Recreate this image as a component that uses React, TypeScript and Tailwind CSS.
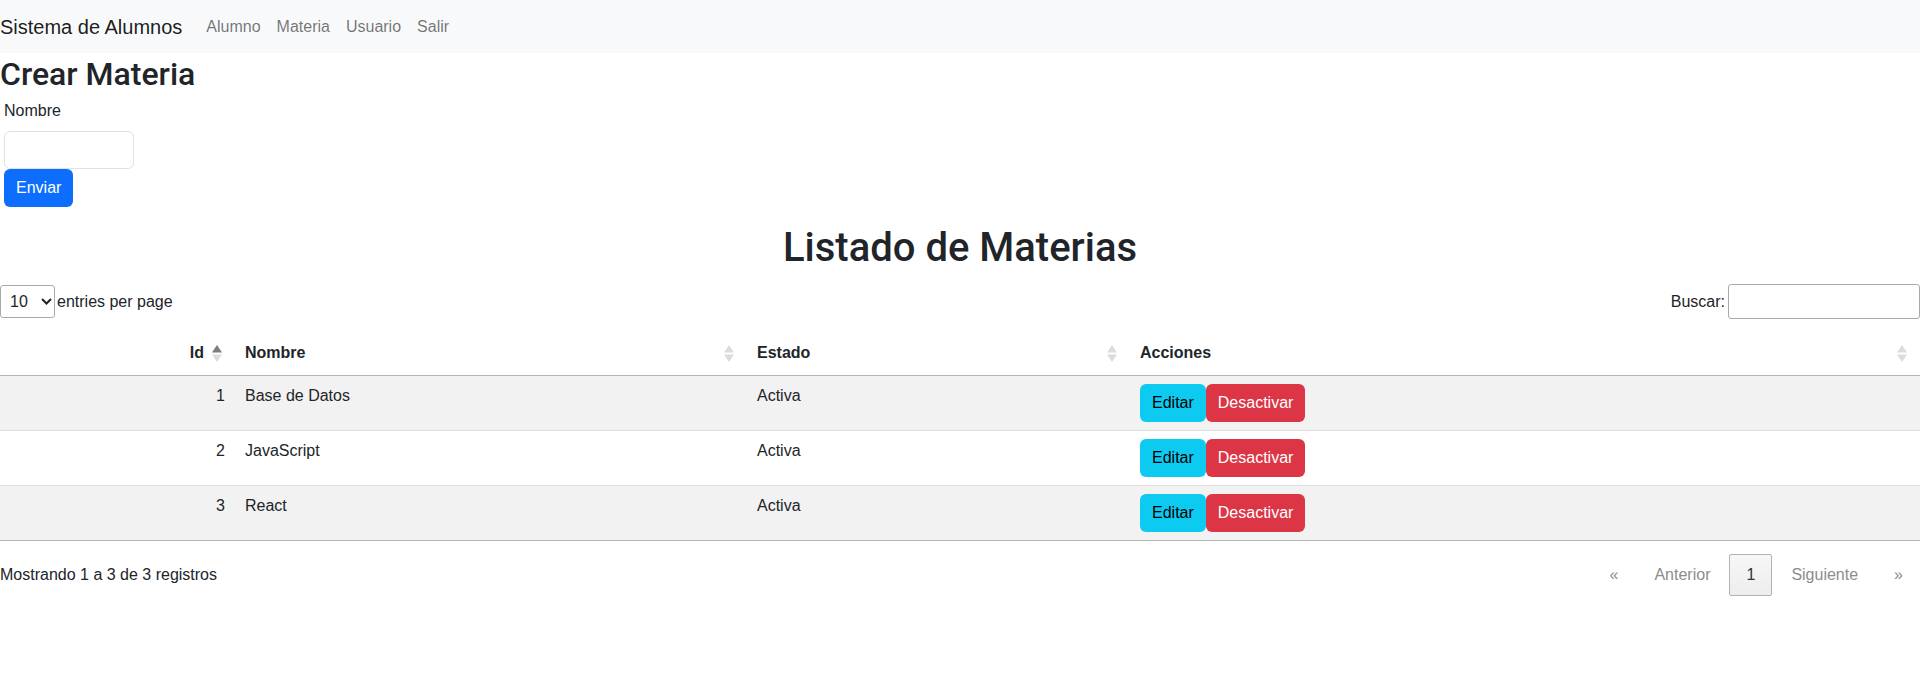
import { useState } from "react";

type Materia = { id: number; nombre: string; estado: string };

const materias: Materia[] = [
  { id: 1, nombre: "Base de Datos", estado: "Activa" },
  { id: 2, nombre: "JavaScript", estado: "Activa" },
  { id: 3, nombre: "React", estado: "Activa" },
];

// flechitas de orden tipo DataTables
function SortIcon({ active = false }: { active?: boolean }) {
  return (
    <svg width="10" height="17" viewBox="0 0 10 17" className="shrink-0">
      <path d="M5 0 L10 7.6 H0 Z" fill={active ? "#7d7d7d" : "#dcdcdc"} />
      <path d="M0 9.4 H10 L5 17 Z" fill="#dcdcdc" />
    </svg>
  );
}

export default function App() {
  const [nombre, setNombre] = useState("");
  const [q, setQ] = useState("");

  return (
    <div className="min-h-screen bg-white font-['Liberation_Sans',Arial,sans-serif] text-[16px] leading-6 text-[#212529]">
      <nav className="flex h-[53px] items-center bg-[#f8f9fa]">
        <span className="mr-4 text-[20px] text-black/90">Sistema de Alumnos</span>
        <ul className="flex">
          {["Alumno", "Materia", "Usuario", "Salir"].map((l) => (
            <li key={l}>
              <a href="#" className="px-2 text-black/55">{l}</a>
            </li>
          ))}
        </ul>
      </nav>

      <h2 className="mb-[6px] pt-[2px] font-['Roboto',Arial,sans-serif] text-[32px] leading-[38px] font-medium">Crear Materia</h2>
      <form className="ml-1" onSubmit={(e) => e.preventDefault()}>
        <label className="mb-2 block">Nombre</label>
        <input value={nombre} onChange={(e) => setNombre(e.target.value)}
          className="block h-[38px] w-[130px] rounded-[6px] border border-[#dee2e6] px-3 outline-none" />
        <button type="submit" className="h-[38px] rounded-[6px] bg-[#0d6efd] px-3 text-white">Enviar</button>
      </form>

      <h1 className="mt-[17px] text-center font-['Roboto',Arial,sans-serif] text-[40px] leading-[48px] font-medium">Listado de Materias</h1>

      <div className="mt-[12px] flex h-[35px] items-center justify-between">
        <div className="flex items-center">
          <div className="relative">
            <select className="h-[33px] w-[55px] appearance-none rounded-[3px] border border-[#aaa] bg-white pl-[9px] text-[16px] outline-none">
              <option>10</option>
              <option>25</option>
              <option>50</option>
            </select>
            <svg width="11" height="7" viewBox="0 0 11 7" className="pointer-events-none absolute top-[13px] left-[41px]">
              <polyline points="1,1 5.5,5.5 10,1" fill="none" stroke="#222" strokeWidth="2" />
            </svg>
          </div>
          <span className="ml-[2px]">entries per page</span>
        </div>
        <div className="flex items-center">
          <span>Buscar:</span>
          <input value={q} onChange={(e) => setQ(e.target.value)}
            className="ml-[3px] h-[35px] w-[192px] rounded-[3px] border border-[#aaa] px-1 outline-none" />
        </div>
      </div>

      <table className="mt-3 w-full table-fixed border-collapse">
        <colgroup>
          <col className="w-[235px]" />
          <col className="w-[512px]" />
          <col className="w-[383px]" />
          <col />
        </colgroup>
        <thead>
          <tr>
            <th className="border-b border-[#b3b3b3] py-[10px] pr-[13px] pl-[10px] font-bold">
              <div className="flex items-center justify-end gap-2">Id <SortIcon active /></div>
            </th>
            {["Nombre", "Estado", "Acciones"].map((h) => (
              <th key={h} className="border-b border-[#b3b3b3] py-[10px] pr-[13px] pl-[10px] text-left font-bold">
                <div className="flex items-center justify-between">{h} <SortIcon /></div>
              </th>
            ))}
          </tr>
        </thead>
        <tbody>
          {materias.map((m, i) => {
            const last = i === materias.length - 1;
            const b = last ? "border-b border-[#b3b3b3]" : "border-b border-[#dedede]";
            return (
              <tr key={m.id} className={i % 2 === 0 ? "bg-[#f2f2f2]" : "bg-white"}>
                <td className={`px-[10px] py-2 text-right align-top ${b}`}>{m.id}</td>
                <td className={`px-[10px] py-2 align-top ${b}`}>{m.nombre}</td>
                <td className={`px-[10px] py-2 align-top ${b}`}>{m.estado}</td>
                <td className={`px-[10px] py-2 align-top ${b}`}>
                  <div className="flex">
                    <button className="h-[38px] rounded-[6px] bg-[#0dcaf0] px-3 text-black">Editar</button>
                    <button className="h-[38px] rounded-[6px] bg-[#dc3545] px-3 text-white">Desactivar</button>
                  </div>
                </td>
              </tr>
            );
          })}
        </tbody>
      </table>

      <div className="mt-[13px] flex items-center justify-between">
        <div>Mostrando 1 a 3 de 3 registros</div>
        <div className="flex">
          <span className="ml-[2px] rounded-[2px] border border-transparent px-4 py-2 text-[#8c8c8c]">«</span>
          <span className="ml-[2px] rounded-[2px] border border-transparent px-4 py-2 text-[#8c8c8c]">Anterior</span>
          <span className="ml-[2px] rounded-[2px] border border-[#b3b3b3] bg-gradient-to-b from-[#f7f7f7] to-[#ededed] px-4 py-2 text-[#333]">1</span>
          <span className="ml-[2px] rounded-[2px] border border-transparent px-4 py-2 text-[#8c8c8c]">Siguiente</span>
          <span className="ml-[2px] rounded-[2px] border border-transparent px-4 py-2 text-[#8c8c8c]">»</span>
        </div>
      </div>
    </div>
  );
}
